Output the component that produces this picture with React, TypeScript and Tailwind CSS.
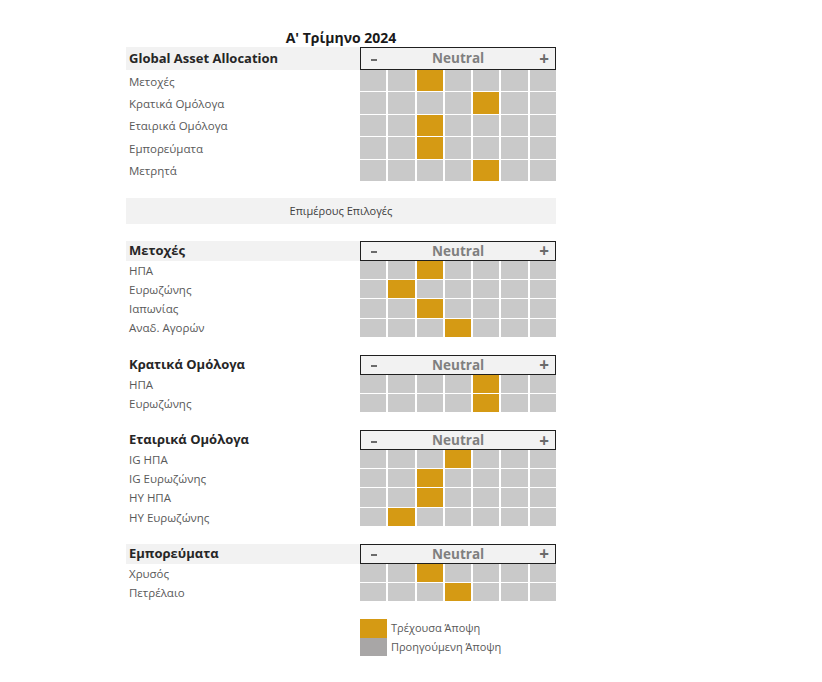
const ORANGE = "bg-[#d59a14]";

type Row = { label: string; pos: number };
type Section = { title: string; shaded: boolean; rows: Row[] };

const globalRows: Row[] = [
  { label: "Μετοχές", pos: 2 },
  { label: "Κρατικά Ομόλογα", pos: 4 },
  { label: "Εταιρικά Ομόλογα", pos: 2 },
  { label: "Εμπορεύματα", pos: 2 },
  { label: "Μετρητά", pos: 4 },
];

const sections: Section[] = [
  {
    title: "Μετοχές",
    shaded: true,
    rows: [
      { label: "ΗΠΑ", pos: 2 },
      { label: "Ευρωζώνης", pos: 1 },
      { label: "Ιαπωνίας", pos: 2 },
      { label: "Αναδ. Αγορών", pos: 3 },
    ],
  },
  {
    title: "Κρατικά Ομόλογα",
    shaded: false,
    rows: [
      { label: "ΗΠΑ", pos: 4 },
      { label: "Ευρωζώνης", pos: 4 },
    ],
  },
  {
    title: "Εταιρικά Ομόλογα",
    shaded: false,
    rows: [
      { label: "IG ΗΠΑ", pos: 3 },
      { label: "IG Ευρωζώνης", pos: 2 },
      { label: "HY ΗΠΑ", pos: 2 },
      { label: "HY Ευρωζώνης", pos: 1 },
    ],
  },
  {
    title: "Εμπορεύματα",
    shaded: true,
    rows: [
      { label: "Χρυσός", pos: 2 },
      { label: "Πετρέλαιο", pos: 3 },
    ],
  },
];

const Header = ({
  title,
  shaded,
  tall,
}: {
  title: string;
  shaded: boolean;
  tall?: boolean;
}) => (
  <div className={`flex ${tall ? "h-[23px]" : "h-[20px]"}`}>
    <div
      className={`flex w-[234px] items-center pl-[3px] text-[13px] font-bold text-[#262626] ${
        shaded ? "bg-[#f2f2f2]" : ""
      }`}
    >
      {title}
    </div>
    <div className="flex w-[196px] items-center justify-between border-[1.5px] border-[#1f1f1f] bg-[#f2f2f2] pl-[10px] pr-[6px] text-[13.5px] font-bold text-[#7f7f7f]">
      <span className="mt-[3px] h-[2px] w-[6px] bg-[#6b6b6b]" />
      <span>Neutral</span>
      <span className="text-[17px] leading-none text-[#6b6b6b]">+</span>
    </div>
  </div>
);

const GridRow = ({ label, pos, tall }: Row & { tall?: boolean }) => (
  <div className={`flex ${tall ? "h-[22.4px]" : "h-[19.2px]"}`}>
    <div className="flex w-[234px] items-center pl-[3px] text-[11.5px] text-[#595959]">
      {label}
    </div>
    <div className="grid w-[196px] grid-cols-7 gap-x-[2px] border-b border-white">
      {Array.from({ length: 7 }).map((_, i) => (
        <div key={i} className={i === pos ? ORANGE : "bg-[#c9c9c9]"} />
      ))}
    </div>
  </div>
);

export default function App() {
  return (
    <div
      className="min-h-[682px] w-[822px] bg-white pl-[126px] pt-[27px]"
      style={{ fontFamily: '"Open Sans", "Noto Sans", sans-serif' }}
    >
      <div className="w-[430px]">
        <div className="flex h-[20px] items-center justify-center text-[14px] font-bold text-[#1a1a1a]">
          Α' Τρίμηνο 2024
        </div>
        <Header title="Global Asset Allocation" shaded tall />
        {globalRows.map((r) => (
          <GridRow key={r.label} {...r} tall />
        ))}

        <div className="mt-[16px] flex h-[26px] items-center justify-center bg-[#f2f2f2] text-[11px] text-[#404040]">
          Επιμέρους Επιλογές
        </div>

        {sections.map((s) => (
          <div key={s.title} className="mt-[17px]">
            <Header title={s.title} shaded={s.shaded} />
            {s.rows.map((r) => (
              <GridRow key={r.label} {...r} />
            ))}
          </div>
        ))}

        <div className="ml-[234px] mt-[17px] flex flex-col">
          <div className="flex h-[18.5px] items-center">
            <div className={`h-full w-[27px] ${ORANGE}`} />
            <span className="pl-[4px] text-[11px] text-[#595959]">
              Τρέχουσα Άποψη
            </span>
          </div>
          <div className="flex h-[18.5px] items-center">
            <div className="h-full w-[27px] bg-[#a8a6a6]" />
            <span className="pl-[4px] text-[11px] text-[#595959]">
              Προηγούμενη Άποψη
            </span>
          </div>
        </div>
      </div>
    </div>
  );
}
